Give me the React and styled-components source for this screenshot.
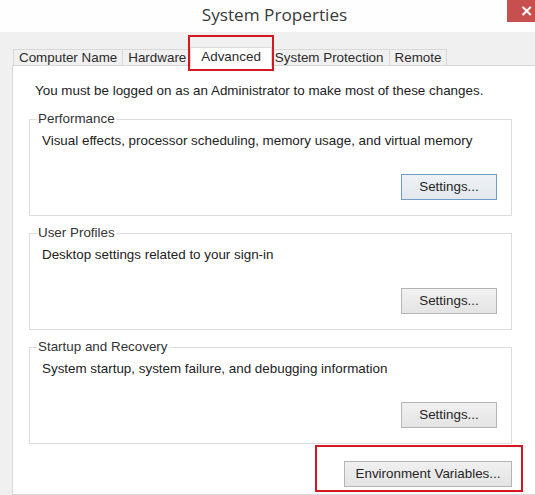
import React from 'react';
import styled, { createGlobalStyle } from 'styled-components';

const GlobalStyle = createGlobalStyle`
  html, body {
    margin: 0;
    padding: 0;
    overflow: hidden;
    background: #f0f0f0;
  }
  body {
    font-family: "Liberation Sans", Arial, sans-serif;
    font-size: 13.4px;
    color: #222;
  }
`;

const Window = styled.div`
  width: 535px;
  height: 495px;
  background: #f0f0f0;
  display: flex;
  flex-direction: column;
  overflow: hidden;
`;

const TitleBar = styled.div`
  height: 32px;
  background: #fefefe;
  display: grid;
  grid-template-columns: 1fr auto 1fr;
  padding-left: 14px;
  box-sizing: border-box;
`;

const Title = styled.div`
  grid-column: 2;
  font-family: "Open Sans", "Liberation Sans", sans-serif;
  font-size: 17.2px;
  line-height: 30px;
  color: #3a3a3a;
`;

const CloseButton = styled.div`
  grid-column: 3;
  justify-self: end;
  width: 28px;
  height: 22px;
  background: #c7504f;
  color: #fff;
  font-family: "DejaVu Sans", sans-serif;
  font-size: 16px;
  font-weight: bold;
  line-height: 21px;
  padding-left: 13px;
  box-sizing: border-box;
`;

const TabStrip = styled.div`
  display: flex;
  align-items: flex-end;
  margin: 16px 0 0 13px;
  height: 18px;
  position: relative;
  z-index: 1;
`;

const Tab = styled.div`
  position: relative;
  height: ${p => (p.$active ? '19px' : '15px')};
  line-height: ${p => (p.$active ? '17px' : '15px')};
  padding: 0 ${p => (p.$active ? '10px' : '5px')};
  margin: 0 ${p => (p.$active ? '-2px' : '0')} ${p => (p.$active ? '-1px' : '0')};
  background: ${p => (p.$active ? '#fff' : '#f0f0f0')};
  border: 1px solid #d9d9d9;
  border-bottom: ${p => (p.$active ? 'none' : '1px solid #d9d9d9')};
  border-left-width: ${p => (p.$first || p.$active ? '1px' : '0')};
  color: #2b2b2b;
  white-space: nowrap;
  z-index: ${p => (p.$active ? 2 : 1)};

  ${p => p.$highlight && `
    &::after {
      content: '';
      position: absolute;
      left: -3px;
      right: -3px;
      top: -13px;
      bottom: -4px;
      border: 2px solid #d1191f;
    }
  `}
`;

const Panel = styled.div`
  flex: 1;
  margin: -1px -12px 0 12px;
  background: #fff;
  border: 1px solid #d9d9d9;
  padding: 17px 22px 0 16px;
  display: flex;
  flex-direction: column;
`;

const Notice = styled.p`
  margin: 0 0 12px 6px;
  line-height: 16px;
`;

const GroupBox = styled.fieldset`
  margin: 0 0 9px 0;
  width: 483px;
  box-sizing: border-box;
  border: 1px solid #dcdcdc;
  padding: 0 14px 15px 8px;
  display: flex;
  flex-direction: column;
`;

const Legend = styled.legend`
  padding: 0 1px;
  margin-left: -1px;
  line-height: 16px;
  color: #333;
`;

const Description = styled.div`
  margin: 6px 0 0 4px;
  line-height: 16px;
`;

const Button = styled.div`
  align-self: flex-end;
  width: ${p => p.$width || '96px'};
  height: 26px;
  box-sizing: border-box;
  border: 1px solid ${p => (p.$default ? '#6f9cc6' : '#b4b4b4')};
  background: ${p => (p.$default
    ? 'linear-gradient(#eef2f6, #e2e8ee)'
    : 'linear-gradient(#f0f0f0, #e4e4e4)')};
  text-align: center;
  line-height: 24px;
  color: #262626;
`;

const SettingsButton = styled(Button)`
  margin-top: 25px;
`;

const Footer = styled.div`
  width: 483px;
  display: flex;
  justify-content: flex-end;
  margin-top: 8px;
`;

const Highlight = styled.div`
  position: relative;

  &::after {
    content: '';
    position: absolute;
    left: -29px;
    right: -11px;
    top: -16px;
    bottom: -5px;
    border: 2px solid #d1191f;
  }
`;

const groups = [
  {
    title: 'Performance',
    text: 'Visual effects, processor scheduling, memory usage, and virtual memory',
    focused: true,
  },
  { title: 'User Profiles', text: 'Desktop settings related to your sign-in' },
  {
    title: 'Startup and Recovery',
    text: 'System startup, system failure, and debugging information',
  },
];

const tabs = ['Computer Name', 'Hardware', 'Advanced', 'System Protection', 'Remote'];

export default function App() {
  return (
    <>
      <GlobalStyle />
      <Window>
        <TitleBar>
          <Title>System Properties</Title>
          <CloseButton>×</CloseButton>
        </TitleBar>
        <TabStrip>
          {tabs.map((t, i) => (
            <Tab
              key={t}
              $first={i === 0}
              $active={t === 'Advanced'}
              $highlight={t === 'Advanced'}
            >
              {t}
            </Tab>
          ))}
        </TabStrip>
        <Panel>
          <Notice>
            You must be logged on as an Administrator to make most of these changes.
          </Notice>
          {groups.map(g => (
            <GroupBox key={g.title}>
              <Legend>{g.title}</Legend>
              <Description>{g.text}</Description>
              <SettingsButton $default={g.focused}>Settings...</SettingsButton>
            </GroupBox>
          ))}
          <Footer>
            <Highlight>
              <Button $width="168px">Environment Variables...</Button>
            </Highlight>
          </Footer>
        </Panel>
      </Window>
    </>
  );
}
